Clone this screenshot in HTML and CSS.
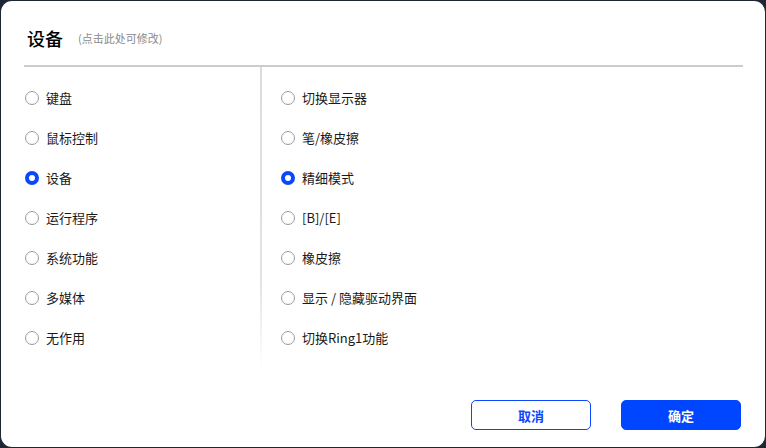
FILE: index.html
```html
<!DOCTYPE html>
<html lang="zh-CN">
<head>
<meta charset="utf-8">
<link rel="stylesheet" href="styles.css">
</head>
<body>
<div class="dialog">
  <div class="header">
    <span class="title">设备</span>
    <span class="hint">(点击此处可修改)</span>
  </div>
  <div class="body">
    <div class="col col-left">
      <div class="item"><span class="radio"></span><span>键盘</span></div>
      <div class="item"><span class="radio"></span><span>鼠标控制</span></div>
      <div class="item"><span class="radio on"></span><span>设备</span></div>
      <div class="item"><span class="radio"></span><span>运行程序</span></div>
      <div class="item"><span class="radio"></span><span>系统功能</span></div>
      <div class="item"><span class="radio"></span><span>多媒体</span></div>
      <div class="item"><span class="radio"></span><span>无作用</span></div>
    </div>
    <div class="divider"></div>
    <div class="col col-right">
      <div class="item"><span class="radio"></span><span>切换显示器</span></div>
      <div class="item"><span class="radio"></span><span>笔/橡皮擦</span></div>
      <div class="item"><span class="radio on"></span><span>精细模式</span></div>
      <div class="item"><span class="radio"></span><span>[B]/[E]</span></div>
      <div class="item"><span class="radio"></span><span>橡皮擦</span></div>
      <div class="item"><span class="radio"></span><span>显示 / 隐藏驱动界面</span></div>
      <div class="item"><span class="radio"></span><span>切换Ring1功能</span></div>
    </div>
  </div>
  <div class="footer">
    <button class="btn btn-cancel">取消</button>
    <button class="btn btn-ok">确定</button>
  </div>
</div>
</body>
</html>
```
FILE: styles.css
```css
html, body {
  margin: 0;
  padding: 0;
  width: 766px;
  height: 448px;
  background: #1e2533;
  overflow: hidden;
}
body {
  padding: 1px;
  box-sizing: border-box;
  font-family: "Microsoft YaHei", "Noto Sans CJK SC", "Noto Sans", sans-serif;
  color: #1a1a1a;
}
.dialog {
  width: 764px;
  height: 446px;
  background: #fff;
  border-radius: 11px;
  box-sizing: border-box;
  padding: 0 22px 0 23px;
  display: flex;
  flex-direction: column;
}
.header {
  height: 66px;
  border-bottom: 2px solid #cccccc;
  display: flex;
  align-items: center;
  padding-left: 3px;
  padding-top: 9px;
  box-sizing: border-box;
  flex: none;
}
.title {
  font-size: 18px;
  font-weight: 500;
  color: #000;
  line-height: 24px;
}
.hint {
  font-size: 11px;
  color: #8a8a8a;
  margin-left: 15px;
  line-height: 24px;
  padding-top: 1px;
}
.body {
  display: flex;
  height: 303px;
}
.col {
  padding-top: 11px;
  display: flex;
  flex-direction: column;
}
.col-left {
  width: 236px;
  padding-left: 1px;
  box-sizing: border-box;
}
.col-right {
  padding-left: 19px;
}
.divider {
  width: 2px;
  background: linear-gradient(to bottom, #dcdcdc 0%, #e2e2e2 70%, rgba(230,230,230,0) 100%);
}
.item {
  height: 40px;
  display: flex;
  align-items: center;
  font-size: 13px;
  line-height: 18px;
}
.radio {
  width: 14px;
  height: 14px;
  border: 1.6px solid #9a9a9a;
  border-radius: 50%;
  box-sizing: border-box;
  margin-right: 7px;
  flex: none;
}
.radio.on {
  border: 4px solid #0a47ff;
}
.footer {
  margin-top: auto;
  display: flex;
  justify-content: flex-end;
  gap: 30px;
  padding-right: 2px;
  padding-bottom: 17px;
}
.btn {
  width: 120px;
  height: 30px;
  border-radius: 5px;
  font-family: "Microsoft YaHei", "Noto Sans CJK SC", sans-serif;
  font-size: 13px;
  font-weight: 700;
  cursor: pointer;
  padding: 0;
}
.btn-cancel {
  background: #fff;
  border: 1px solid #0a47ff;
  color: #0a47ff;
}
.btn-ok {
  background: #0045ff;
  border: 1px solid #0045ff;
  color: #fff;
}
```
